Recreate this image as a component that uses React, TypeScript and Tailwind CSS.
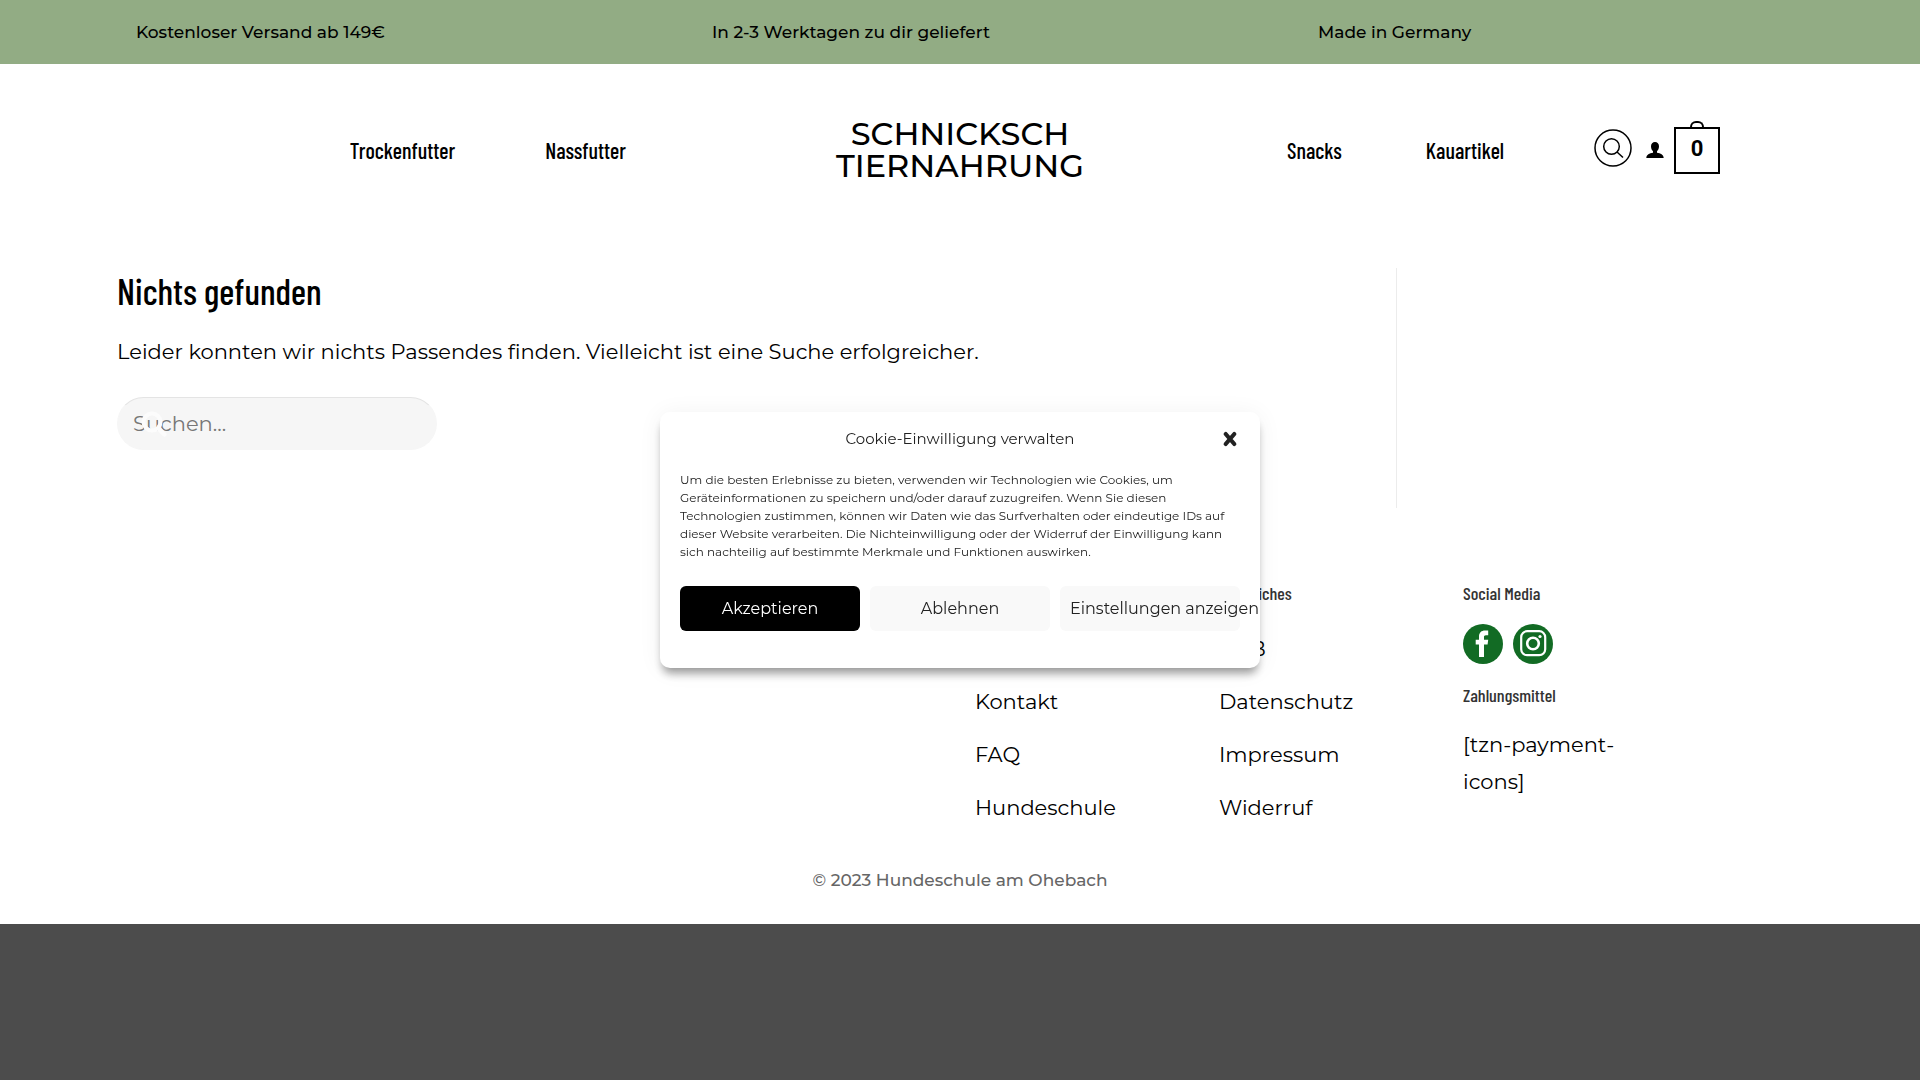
import { useState } from "react";

const usps = ["Kostenloser Versand ab 149€", "In 2-3 Werktagen zu dir geliefert", "Made in Germany"];

const condensed = "font-['Barlow_Condensed','Roboto_Condensed','Liberation_Sans_Narrow',sans-serif]";

function NavLink({ label }: { label: string }) {
  return (
    <a href="#" className={`${condensed} text-[22px] leading-8 font-medium text-black`}>
      {label}
    </a>
  );
}

function FooterLinks({ title, links }: { title: string; links: string[] }) {
  return (
    <div className="px-[15px]">
      <h3 className={`${condensed} text-lg leading-6 font-medium text-[#333]`}>{title}</h3>
      <ul className="mt-[17px]">
        {links.map((link) => (
          <li key={link} className="py-2 text-[21px] leading-[37px]">
            <a href="#">{link}</a>
          </li>
        ))}
      </ul>
    </div>
  );
}

function Header() {
  return (
    <header>
      {/* USP bar */}
      <div className="bg-[#92ac84]">
        <div className="grid h-16 grid-cols-[576fr_606fr_466fr] items-center px-[136px] pt-0.5 text-[17px] font-medium">
          {usps.map((usp) => (
            <p key={usp}>{usp}</p>
          ))}
        </div>
      </div>

      {/* Main navigation */}
      <div className="grid grid-cols-[1fr_auto_1fr] items-center px-[200px] pt-[54px] pb-[58px]">
        <nav className="flex justify-end gap-[90px] pr-[210px]">
          <NavLink label="Trockenfutter" />
          <NavLink label="Nassfutter" />
        </nav>
        <a href="#" className="text-center text-[32px] leading-8 font-medium">
          <span className="block">SCHNICKSCH</span>
          <span className="block">TIERNAHRUNG</span>
        </a>
        <div className="flex items-center justify-between pl-[203px]">
          <nav className="flex gap-[84px]">
            <NavLink label="Snacks" />
            <NavLink label="Kauartikel" />
          </nav>
          <div className="flex items-center">
            <button aria-label="Suche" className="mr-3.5 mb-1">
              <svg width="38" height="38" viewBox="0 0 38 38" fill="none" stroke="black" strokeWidth="1.5">
                <circle cx="19" cy="19" r="18" />
                <circle cx="17.5" cy="17.5" r="7.8" />
                <path d="M23 23l6 5.5" />
              </svg>
            </button>
            <a href="#" aria-label="Mein Konto" className="mr-2.5">
              <svg width="18" height="18" viewBox="0 0 18 18">
                <path d="M9 1C6.600 1 5 2.700 5 5.300c0 2 .8 4 2 5v1.400C3.500 12.200.5 13.500.3 17h17.400c-.2-3.500-3.200-4.800-6.700-5.300v-1.400c1.200-1 2-3 2-5C13 2.700 11.400 1 9 1z" />
              </svg>
            </a>
            <a href="#" aria-label="Warenkorb" className="relative flex h-[47px] w-[46px] items-center justify-center border-2 border-black font-['Roboto',sans-serif] text-[22px] font-bold">
              <span className="absolute -top-2 left-3.5 h-1.5 w-3.5 rounded-t-full border-2 border-b-0 border-black" />
              <span className="pb-1">0</span>
            </a>
          </div>
        </div>
      </div>
    </header>
  );
}

function CookieDialog({ onClose }: { onClose: () => void }) {
  return (
    <div role="dialog" aria-labelledby="cookie-title" className="fixed top-1/2 left-1/2 w-[600px] -translate-x-1/2 -translate-y-1/2 rounded-[10px] bg-white px-5 pt-[11px] pb-[37px] text-[#222] shadow-[0_8px_10px_-3px_rgba(0,0,0,0.4),0_2px_24px_rgba(0,0,0,0.06)]">
      <div className="grid grid-cols-[20px_1fr_20px] items-center">
        <h2 id="cookie-title" className="col-start-2 text-center text-[15px] leading-8">
          Cookie-Einwilligung verwalten
        </h2>
        <button onClick={onClose} aria-label="Dialog schließen">
          <svg width="20" height="20" viewBox="0 0 20 20" stroke="currentColor" strokeWidth="4.200" strokeLinecap="round">
            <path d="M5.700 5l8.600 10M14.300 5l-8.600 10" />
          </svg>
        </button>
      </div>
      <p className="mt-4 text-[12px] leading-[18px]">
        Um die besten Erlebnisse zu bieten, verwenden wir Technologien wie Cookies, um
        <br />
        Geräteinformationen zu speichern und/oder darauf zuzugreifen. Wenn Sie diesen
        <br />
        Technologien zustimmen, können wir Daten wie das Surfverhalten oder eindeutige IDs auf
        <br />
        dieser Website verarbeiten. Die Nichteinwilligung oder der Widerruf der Einwilligung kann
        <br />
        sich nachteilig auf bestimmte Merkmale und Funktionen auswirken.
      </p>
      <div className="mt-[25px] grid grid-cols-3 gap-2.5 text-base">
        <button onClick={onClose} className="h-[45px] rounded-md bg-black text-white">
          Akzeptieren
        </button>
        <button onClick={onClose} className="h-[45px] rounded-md bg-[#f9f9f9]">
          Ablehnen
        </button>
        <button className="flex h-[45px] items-center rounded-md bg-[#f9f9f9] px-2.5 whitespace-nowrap">
          Einstellungen anzeigen
        </button>
      </div>
    </div>
  );
}

export default function App() {
  const [showCookies, setShowCookies] = useState(true);

  return (
    <div className="flex min-h-screen flex-col bg-[#4c4c4c] font-['Montserrat','Inter',sans-serif] text-black">
      <div className="bg-white">
        <Header />

        {/* Empty search result */}
        <main className="flex px-[117px] pt-7">
          <section className="min-h-60 w-[1280px] border-r border-[#ececec]">
            <h1 className={`${condensed} text-[36px] leading-[46px] font-medium`}>Nichts gefunden</h1>
            <p className="mt-[19px] text-[21px] leading-[37px]">
              Leider konnten wir nichts Passendes finden. Vielleicht ist eine Suche erfolgreicher.
            </p>
            <form className="relative mt-[27px] w-80">
              <input
                type="search"
                aria-label="Suchen"
                placeholder="Suchen..."
                className="h-[53px] w-full rounded-full border border-[#f6f6f6] border-t-[#e4e4e4] bg-[#f6f6f6] px-[15px] text-[21px] placeholder:text-[#777]"
              />
              <button aria-label="Suchen" className="absolute top-3 left-[22px]">
                <svg width="30" height="30" viewBox="0 0 30 30" fill="none" stroke="#fcfcfc" strokeLinecap="round">
                  <circle cx="13" cy="13" r="8.500" strokeWidth="4" />
                  <path d="M20 20l5.500 5.500" strokeWidth="4.500" />
                </svg>
              </button>
            </form>
          </section>
        </main>

        <footer className="pt-[73px]">
          <div className="mx-auto grid max-w-[1464px] grid-cols-6">
            <div className="col-span-3" />
            <FooterLinks title="Service" links={["Versand", "Kontakt", "FAQ", "Hundeschule"]} />
            <FooterLinks title="Rechtliches" links={["AGB", "Datenschutz", "Impressum", "Widerruf"]} />
            <div className="px-[15px]">
              <h3 className={`${condensed} text-lg leading-6 font-medium text-[#333]`}>Social Media</h3>
              <div className="mt-[19px] flex gap-2.5">
                <a href="#" aria-label="Facebook">
                  <svg width="40" height="40" viewBox="0 0 40 40">
                    <circle cx="20" cy="20" r="20" fill="#126b24" />
                    <path fill="white" d="M16 33V20.500h-3.300v-4.700H16v-3.300C16 8.600 18.500 6.500 22 6.500h3.200v4.700h-2.300c-1.400 0-1.900.7-1.900 1.900v2.700h4.200l-.6 4.700H21V33z" />
                  </svg>
                </a>
                <a href="#" aria-label="Instagram">
                  <svg width="40" height="40" viewBox="0 0 40 40" fill="none" stroke="white">
                    <circle cx="20" cy="20" r="20" fill="#126b24" stroke="none" />
                    <rect x="8.200" y="7.200" width="24" height="24" rx="6" strokeWidth="2.200" />
                    <circle cx="20" cy="19.500" r="5.800" strokeWidth="2.600" />
                    <circle cx="27" cy="12.500" r="1.600" fill="white" stroke="none" />
                  </svg>
                </a>
              </div>
              <h3 className={`${condensed} mt-[19px] text-lg leading-6 font-medium text-[#333]`}>Zahlungsmittel</h3>
              <p className="mt-[19px] text-[21px] leading-[37px]">
                [tzn-payment-
                <br />
                icons]
              </p>
            </div>
          </div>
          <p className="pt-[34px] pb-8 text-center text-[17px] leading-6 font-medium text-[#666]">© 2023 Hundeschule am Ohebach</p>
        </footer>
      </div>

      {showCookies && <CookieDialog onClose={() => setShowCookies(false)} />}
    </div>
  );
}
